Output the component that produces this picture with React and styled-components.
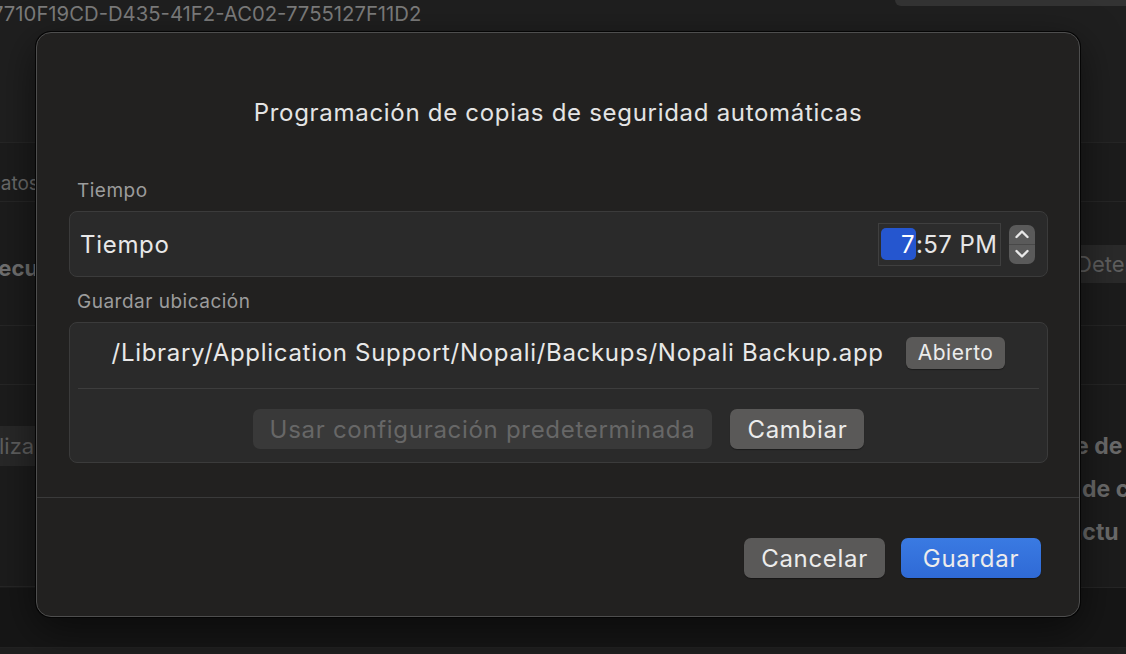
import React from "react";
import styled, { createGlobalStyle } from "styled-components";

const Global = createGlobalStyle`
  html, body { margin: 0; padding: 0; background: #1e1e1e; }
  body { font-family: Inter, "Noto Sans", sans-serif; -webkit-font-smoothing: antialiased; }
  * { box-sizing: border-box; }
`;

const Page = styled.div`
  position: relative;
  width: 1126px;
  height: 654px;
  overflow: hidden;
  background: #1f1f1f;
  display: flex;
  flex-direction: column;
`;

/* ---------- background app ---------- */
const TopBar = styled.div`
  height: 143px;
  display: flex;
  align-items: flex-start;
  justify-content: space-between;
  border-bottom: 1px solid #262626;
`;

const IdText = styled.div`
  margin-left: -8px;
  margin-top: 1px;
  font-size: 20.3px;
  line-height: 26px;
  color: #7b7b7b;
  white-space: nowrap;
`;

const TopTab = styled.div`
  width: 231px;
  height: 6px;
  background: #333333;
  border-bottom-left-radius: 8px;
`;

const BgBody = styled.div`
  flex: 1;
  display: flex;
  justify-content: space-between;
`;

const BgColumn = styled.div`
  width: ${(p) => p.$w}px;
  display: flex;
  flex-direction: column;
  background: #1c1c1c;
`;

const BgRow = styled.div`
  height: ${(p) => p.$h}px;
  display: flex;
  flex-direction: column;
  justify-content: center;
  padding-top: ${(p) => p.$pt || 0}px;
  border-bottom: ${(p) => (p.$line ? "1px solid #262626" : "none")};
  overflow: hidden;
  white-space: nowrap;
  background: ${(p) => p.$bg || "transparent"};
`;

const BgText = styled.span`
  font-size: ${(p) => p.$size || 19}px;
  font-weight: ${(p) => (p.$bold ? 700 : 400)};
  color: ${(p) => p.$color || "#6a6a6a"};
  margin-left: ${(p) => p.$ml || 0}px;
  line-height: 26px;
`;

const BgChip = styled.span`
  align-self: flex-start;
  height: 38px;
  line-height: 38px;
  background: #2a2a2a;
  color: #5f5f5f;
  font-size: 22px;
  margin-left: ${(p) => p.$ml || 0}px;
  padding: 0 10px;
  border-radius: 4px;
`;

const BgFoot = styled.div`
  flex: 1;
  background: #161616;
  border-bottom: 1px solid #222222;
  margin-bottom: 6px;
`;

/* ---------- modal ---------- */
const Modal = styled.div`
  position: absolute;
  left: 36px;
  top: 32px;
  width: 1044px;
  height: 585px;
  background: #222120;
  border: 1px solid #4e4e4e;
  border-radius: 15px;
  box-shadow: 0 0 0 1px #050505, 0 12px 40px rgba(0, 0, 0, 0.55);
  display: flex;
  flex-direction: column;
`;

const Title = styled.h1`
  margin: 65px 0 0;
  text-align: center;
  font-size: 24px;
  letter-spacing: 0.7px;
  line-height: 30px;
  font-weight: 400;
  color: #e4e4e4;
`;

const Content = styled.div`
  padding: 51px 31px 0 32px;
  display: flex;
  flex-direction: column;
`;

const Label = styled.div`
  font-size: 19px;
  letter-spacing: 0.5px;
  line-height: 24px;
  color: #9c9c9c;
  padding-left: 8px;
  margin-top: ${(p) => p.$mt || 0}px;
  margin-bottom: 8px;
`;

const Group = styled.div`
  background: #2a2a2a;
  border: 1px solid #3b3b3b;
  border-radius: 8px;
  display: flex;
  flex-direction: column;
`;

const TimeRow = styled.div`
  height: 64px;
  display: flex;
  align-items: center;
  justify-content: space-between;
  padding: 0 12px 0 10px;
`;

const RowText = styled.span`
  font-size: 24px;
  letter-spacing: 0.7px;
  color: #e8e8e8;
  white-space: nowrap;
`;

const TimeControls = styled.div`
  display: flex;
  align-items: center;
  gap: 8px;
`;

const TimeField = styled.div`
  width: 123px;
  height: 43px;
  border: 1px solid #3f3f3f;
  background: #2c2c2c;
  display: flex;
  align-items: center;
  padding-left: 2px;
  font-size: 24px;
  letter-spacing: 0.4px;
  color: #e6e6e6;
  white-space: nowrap;
`;

const Segment = styled.span`
  width: 35px;
  height: 32px;
  border-radius: 5px;
  background: #2556cf;
  color: #ffffff;
  display: flex;
  align-items: center;
  justify-content: flex-end;
  padding-right: 1px;
`;

const Stepper = styled.div`
  width: 26px;
  height: 39px;
  border-radius: 7px;
  background: #5a5a5a;
  display: flex;
  flex-direction: column;
  overflow: hidden;
`;

const StepHalf = styled.div`
  flex: 1;
  display: flex;
  align-items: center;
  justify-content: center;
  border-top: ${(p) => (p.$bottom ? "1px solid #484848" : "none")};
`;

const PathRow = styled.div`
  height: 65px;
  display: flex;
  align-items: center;
  justify-content: center;
  gap: 22px;
  padding-bottom: 6px;
`;

const Divider = styled.div`
  height: 1px;
  background: #3d3d3d;
  margin: 0 8px;
`;

const ActionRow = styled.div`
  height: 73px;
  display: flex;
  align-items: flex-start;
  justify-content: center;
  gap: 18px;
  padding-top: 20px;
`;

const Button = styled.button`
  font-family: inherit;
  border: none;
  outline: none;
  height: ${(p) => p.$h || 40}px;
  padding: 0 ${(p) => p.$px || 17}px;
  min-width: ${(p) => p.$w || 0}px;
  border-radius: ${(p) => (p.$h && p.$h < 36 ? 6 : 7)}px;
  font-size: ${(p) => p.$fs || 24}px;
  letter-spacing: ${(p) => p.$ls || 0.7}px;
  white-space: nowrap;
  color: ${(p) => (p.$variant === "disabled" ? "#676767" : "#ececec")};
  background: ${(p) =>
    p.$variant === "primary"
      ? "linear-gradient(#3a7ae2, #2f6ad6)"
      : p.$variant === "disabled"
      ? "#393939"
      : "#5a5958"};
  box-shadow: ${(p) =>
    p.$variant === "disabled" ? "none" : "0 1px 1px rgba(0,0,0,0.35)"};
  display: inline-flex;
  align-items: center;
  justify-content: center;
`;

const FooterDivider = styled.div`
  height: 1px;
  background: #3a3a3a;
  margin-top: 34px;
`;

const Footer = styled.div`
  display: flex;
  justify-content: flex-end;
  gap: 16px;
  padding: 40px 38px 0 0;
`;

function Chevron({ up }) {
  return (
    <svg width="16" height="10" viewBox="0 0 16 10">
      <path
        d={up ? "M2.5 8 L8 2.5 L13.5 8" : "M2.5 2 L8 7.5 L13.5 2"}
        fill="none"
        stroke="#e8e8e8"
        strokeWidth="2.4"
        strokeLinecap="round"
        strokeLinejoin="round"
      />
    </svg>
  );
}

export default function App() {
  return (
    <>
      <Global />
      <Page>
        <TopBar>
          <IdText>7710F19CD-D435-41F2-AC02-7755127F11D2</IdText>
          <TopTab />
        </TopBar>
        <BgBody>
          <BgColumn $w={120}>
            <BgRow $h={59} $pt={23} $line>
              <BgText $ml={-13}>Datos</BgText>
            </BgRow>
            <BgRow $h={124} $pt={8} $line>
              <BgText $size={22} $bold $color="#707070" $ml={-21}>
                Ejecución
              </BgText>
            </BgRow>
            <BgRow $h={59} $line />
            <BgRow $h={41} />
            <BgRow $h={40} $bg="#282828">
              <BgText $size={22} $color="#5f5f5f" $ml={-1}>
                lizar
              </BgText>
            </BgRow>
            <BgRow $h={121} $line />
          </BgColumn>
          <BgColumn $w={60}>
            <BgRow $h={59} $line />
            <BgRow $h={124} $line>
              <BgChip>Detener</BgChip>
            </BgRow>
            <BgRow $h={59} $line />
            <BgRow $h={39} />
            <BgRow $h={43}>
              <BgText $size={23} $bold $color="#6a6a6a" $ml={9}>
                e de
              </BgText>
            </BgRow>
            <BgRow $h={43}>
              <BgText $size={23} $bold $color="#6a6a6a" $ml={16}>
                de c
              </BgText>
            </BgRow>
            <BgRow $h={43}>
              <BgText $size={23} $bold $color="#6a6a6a" $ml={3}>
                actu
              </BgText>
            </BgRow>
            <BgRow $h={35} $line />
          </BgColumn>
        </BgBody>
        <BgFoot />

        <Modal>
          <Title>Programación de copias de seguridad automáticas</Title>
          <Content>
            <Label>Tiempo</Label>
            <Group>
              <TimeRow>
                <RowText>Tiempo</RowText>
                <TimeControls>
                  <TimeField>
                    <Segment>7</Segment>
                    <span>:57 PM</span>
                  </TimeField>
                  <Stepper>
                    <StepHalf>
                      <Chevron up />
                    </StepHalf>
                    <StepHalf $bottom>
                      <Chevron />
                    </StepHalf>
                  </Stepper>
                </TimeControls>
              </TimeRow>
            </Group>
            <Label $mt={13}>Guardar ubicación</Label>
            <Group>
              <PathRow>
                <RowText>/Library/Application Support/Nopali/Backups/Nopali Backup.app</RowText>
                <Button $h={32} $fs={21} $ls={0.5} $px={12}>
                  Abierto
                </Button>
              </PathRow>
              <Divider />
              <ActionRow>
                <Button $variant="disabled">Usar configuración predeterminada</Button>
                <Button>Cambiar</Button>
              </ActionRow>
            </Group>
          </Content>
          <FooterDivider />
          <Footer>
            <Button $w={140}>Cancelar</Button>
            <Button $w={140} $variant="primary">
              Guardar
            </Button>
          </Footer>
        </Modal>
      </Page>
    </>
  );
}
